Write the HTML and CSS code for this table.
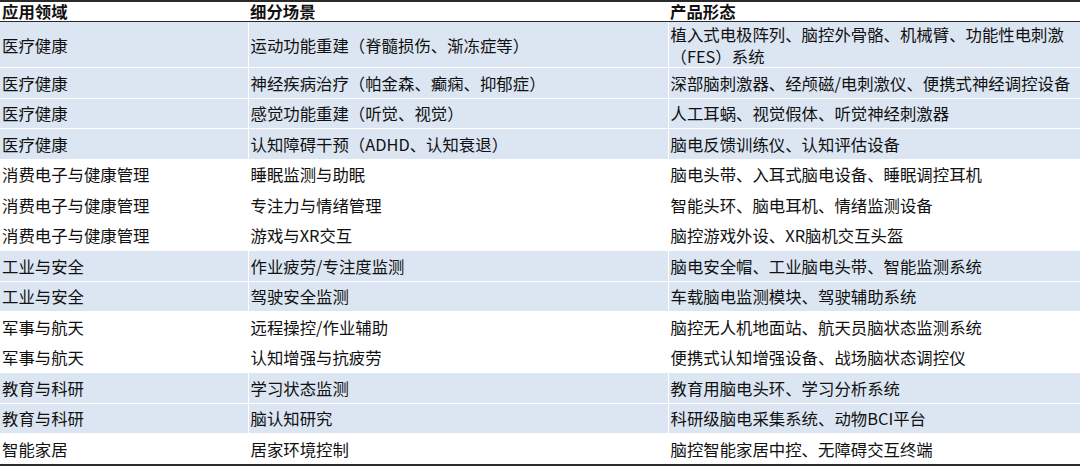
FILE: index.html
```html
<!DOCTYPE html>
<html lang="zh-CN">
<head>
<meta charset="utf-8">
<title>脑机接口应用场景</title>
<link rel="stylesheet" href="styles.css">
</head>
<body>
<table class="grid">
  <colgroup>
    <col class="c1"><col class="c2"><col class="c3">
  </colgroup>
  <thead>
    <tr><th>应用领域</th><th>细分场景</th><th>产品形态</th></tr>
  </thead>
  <tbody>
    <tr class="blue tall"><td>医疗健康</td><td>运动功能重建（脊髓损伤、渐冻症等）</td><td>植入式电极阵列、脑控外骨骼、机械臂、功能性电刺激（FES）系统</td></tr>
    <tr class="blue"><td>医疗健康</td><td>神经疾病治疗（帕金森、癫痫、抑郁症）</td><td>深部脑刺激器、经颅磁/电刺激仪、便携式神经调控设备</td></tr>
    <tr class="blue"><td>医疗健康</td><td>感觉功能重建（听觉、视觉）</td><td>人工耳蜗、视觉假体、听觉神经刺激器</td></tr>
    <tr class="blue"><td>医疗健康</td><td>认知障碍干预（ADHD、认知衰退）</td><td>脑电反馈训练仪、认知评估设备</td></tr>
    <tr><td>消费电子与健康管理</td><td>睡眠监测与助眠</td><td>脑电头带、入耳式脑电设备、睡眠调控耳机</td></tr>
    <tr><td>消费电子与健康管理</td><td>专注力与情绪管理</td><td>智能头环、脑电耳机、情绪监测设备</td></tr>
    <tr><td>消费电子与健康管理</td><td>游戏与XR交互</td><td>脑控游戏外设、XR脑机交互头盔</td></tr>
    <tr class="blue"><td>工业与安全</td><td>作业疲劳/专注度监测</td><td>脑电安全帽、工业脑电头带、智能监测系统</td></tr>
    <tr class="blue"><td>工业与安全</td><td>驾驶安全监测</td><td>车载脑电监测模块、驾驶辅助系统</td></tr>
    <tr><td>军事与航天</td><td>远程操控/作业辅助</td><td>脑控无人机地面站、航天员脑状态监测系统</td></tr>
    <tr><td>军事与航天</td><td>认知增强与抗疲劳</td><td>便携式认知增强设备、战场脑状态调控仪</td></tr>
    <tr class="blue"><td>教育与科研</td><td>学习状态监测</td><td>教育用脑电头环、学习分析系统</td></tr>
    <tr class="blue"><td>教育与科研</td><td>脑认知研究</td><td>科研级脑电采集系统、动物BCI平台</td></tr>
    <tr class="last"><td>智能家居</td><td>居家环境控制</td><td>脑控智能家居中控、无障碍交互终端</td></tr>
  </tbody>
</table>
</body>
</html>
```

FILE: styles.css
```css
html, body {
  margin: 0;
  padding: 0;
  background: #ffffff;
}

body {
  font-family: "Noto Sans CJK SC", "Noto Sans", sans-serif;
  font-size: 16.4px;
  color: #111111;
}

.grid {
  width: 1080px;
  border-collapse: collapse;
  table-layout: fixed;
}

.c1 { width: 248px; }
.c2 { width: 420px; }
.c3 { width: 412px; }

.grid th,
.grid td {
  padding: 0 2px 0 2px;
  text-align: left;
  vertical-align: middle;
  line-height: 22px;
  white-space: normal;
}

.grid th {
  height: 19px;
  font-weight: bold;
  border-top: 2px solid #2a2a2a;
  border-bottom: 1px solid #2a2a2a;
  line-height: 19px;
}

.grid td {
  height: 29.5px;
  border-top: 1px solid #ffffff;
  border-left: 1px solid #ffffff;
}

.grid td:first-child {
  border-left: none;
  padding-left: 2px;
}

.grid tr.tall td {
  height: 45px;
}

.grid tr.blue td {
  background: #dce6f2;
}

.grid tr.last td {
  border-bottom: 2px solid #2a2a2a;
}
```
